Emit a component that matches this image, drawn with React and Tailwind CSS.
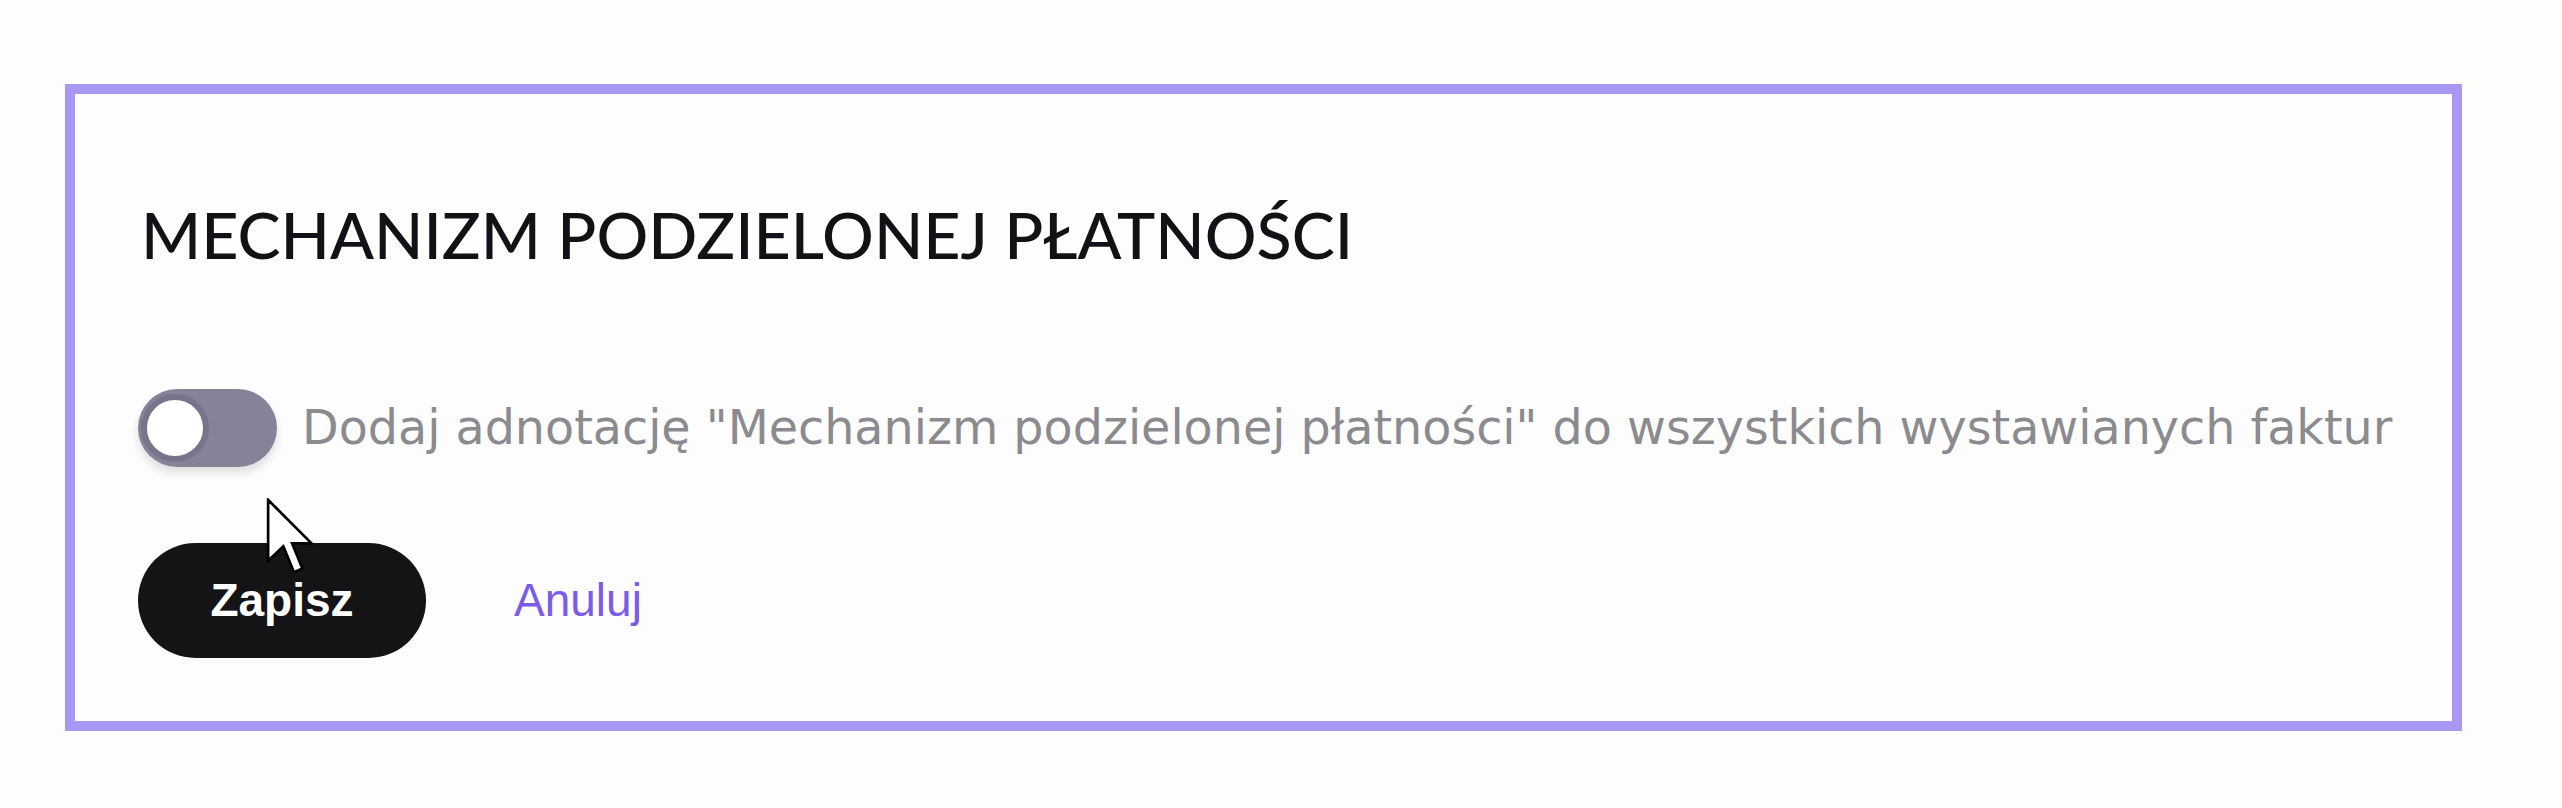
import React, { useState } from 'react';

const Cursor = () => (
  <svg
    className="absolute left-[266px] top-[498px] pointer-events-none"
    width="48"
    height="78"
    viewBox="-0.5 -0.5 12.5 20.5"
  >
    <path
      d="M0 0 L0 16 L4 12.2 L6.8 19 L9 18 L6.3 11.4 L11.4 11.4 Z"
      fill="#fff"
      stroke="#000"
      strokeWidth="0.7"
      strokeLinejoin="miter"
    />
  </svg>
);

const Toggle = ({ checked, onChange }) => (
  <button
    type="button"
    onClick={() => onChange(!checked)}
    className="relative w-[139px] h-[78px] shrink-0 rounded-full bg-[#858398] shadow-[0_6px_10px_rgba(0,0,0,0.12)] flex items-center px-[3px]"
  >
    <span className="w-[68px] h-[68px] rounded-full bg-white border-[6px] border-[#77758a]" />
  </button>
);

export default function App() {
  const [enabled, setEnabled] = useState(false);

  return (
    <div className="relative w-[2562px] h-[808px] bg-[#fdfdfb] pt-[84px] pl-[65px]">
      <div className="w-[2397px] h-[647px] border-[10px] border-[#a898f4] bg-[#fdfdfd] pt-[108px] pl-[63px] flex flex-col">
        <h2 className="pl-[3px] font-['Lato',sans-serif] font-medium text-[64.6px] leading-none text-[#111116]">
          MECHANIZM PODZIELONEJ PŁATNOŚCI
        </h2>

        <div className="mt-[122px] flex items-center gap-[25px]">
          <Toggle checked={enabled} onChange={setEnabled} />
          <span className="font-['DejaVu_Sans',Verdana,sans-serif] text-[47.6px] leading-none text-[#8b8b8f]">
            Dodaj adnotację "Mechanizm podzielonej płatności" do wszystkich wystawianych faktur
          </span>
        </div>

        <div className="mt-[76px] flex items-center gap-[88px]">
          <button
            type="button"
            className="h-[115px] w-[288px] rounded-full bg-[#141417] text-white font-['Liberation_Sans',Arial,sans-serif] font-bold text-[46px]"
          >
            Zapisz
          </button>
          <button
            type="button"
            className="font-['Liberation_Sans',Arial,sans-serif] font-medium text-[46px] text-[#7b5ce8]"
          >
            Anuluj
          </button>
        </div>
      </div>
      <Cursor />
    </div>
  );
}
